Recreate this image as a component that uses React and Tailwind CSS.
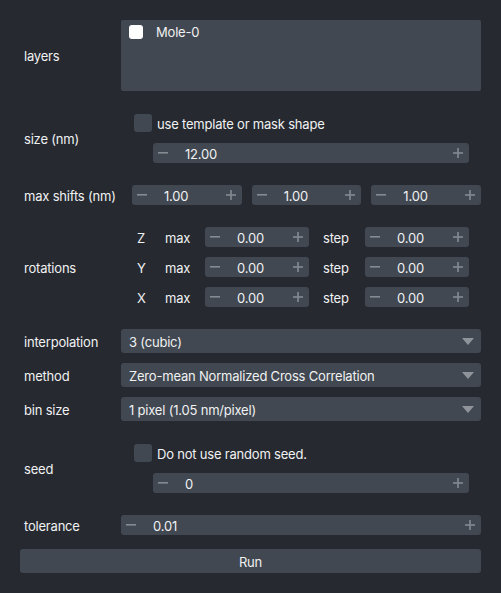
import React from "react";

const Minus = () => (
  <svg width="10" height="10" viewBox="0 0 10 10" className="shrink-0">
    <rect x="0" y="4" width="10" height="1.6" fill="#868b92" />
  </svg>
);

const Plus = () => (
  <svg width="10" height="10" viewBox="0 0 10 10" className="shrink-0">
    <rect x="0" y="4.2" width="10" height="1.6" fill="#868b92" />
    <rect x="4.2" y="0" width="1.6" height="10" fill="#868b92" />
  </svg>
);

const SpinBox = ({ value, className = "" }) => (
  <div
    className={`flex h-[20px] items-center rounded-[3px] bg-[#414851] ${className}`}
  >
    <div className="ml-[5px]">
      <Minus />
    </div>
    <span className="ml-[17px] flex-1 pt-[2px] leading-none">{value}</span>
    <div className="mr-[6px]">
      <Plus />
    </div>
  </div>
);

const ComboBox = ({ value }) => (
  <div className="flex h-[24px] flex-1 items-center rounded-[3px] bg-[#414851] pl-[8px] pr-[7px]">
    <span className="flex-1 pt-[2px] leading-none">{value}</span>
    <svg width="12" height="7" viewBox="0 0 12 7">
      <polygon points="0,0 12,0 6,7" fill="#8f949a" />
    </svg>
  </div>
);

const CheckBox = ({ label }) => (
  <div className="flex h-[18px] items-center">
    <div className="h-[18px] w-[18px] rounded-[3px] bg-[#414851]" />
    <span className="ml-[5px] pt-[2px] leading-none">{label}</span>
  </div>
);

const Label = ({ children, w = "w-[101px]" }) => (
  <div className={`${w} shrink-0 pl-[4px] pt-[2px] leading-none`}>
    {children}
  </div>
);

export default function App() {
  return (
    <div
      className="h-[593px] w-[501px] bg-[#262930] px-[20px] text-[13px] tracking-[-0.2px] text-[#f0f1f2]"
      style={{ fontFamily: "Inter, 'Noto Sans', sans-serif" }}
    >
      {/* layers */}
      <div className="flex items-center pt-[20px]">
        <Label>layers</Label>
        <div className="h-[71px] flex-1 rounded-[2px] bg-[#414851] pl-[8px] pt-[4px]">
          <div className="flex items-center">
            <div className="h-[14px] w-[14px] rounded-[3px] bg-white" />
            <span className="ml-[13px] pt-[2px] leading-none">Mole-0</span>
          </div>
        </div>
      </div>

      {/* size */}
      <div className="mt-[23px] flex items-center">
        <Label>size (nm)</Label>
        <div className="flex flex-1 flex-col">
          <div className="ml-[13px]">
            <CheckBox label="use template or mask shape" />
          </div>
          <SpinBox value="12.00" className="ml-[32px] mr-[12px] mt-[11px]" />
        </div>
      </div>

      {/* max shifts */}
      <div className="mt-[22px] flex items-center">
        <Label w="w-[112px]">max shifts (nm)</Label>
        <div className="flex flex-1 gap-[10px]">
          <SpinBox value="1.00" className="flex-1" />
          <SpinBox value="1.00" className="flex-1" />
          <SpinBox value="1.00" className="flex-1" />
        </div>
      </div>

      {/* rotations */}
      <div className="mt-[22px] flex items-center">
        <Label>rotations</Label>
        <div className="flex flex-col gap-[10px] pl-[16px]">
          {["Z", "Y", "X"].map((axis) => (
            <div key={axis} className="flex h-[20px] items-center">
              <span className="w-[28px] pt-[2px] leading-none">{axis}</span>
              <span className="w-[40px] pt-[2px] leading-none">max</span>
              <SpinBox value="0.00" className="w-[104px]" />
              <span className="ml-[14px] w-[42px] pt-[2px] leading-none">
                step
              </span>
              <SpinBox value="0.00" className="w-[104px]" />
            </div>
          ))}
        </div>
      </div>

      {/* combos */}
      <div className="mt-[22px] flex flex-col gap-[10px]">
        <div className="flex items-center">
          <Label>interpolation</Label>
          <ComboBox value="3 (cubic)" />
        </div>
        <div className="flex items-center">
          <Label>method</Label>
          <ComboBox value="Zero-mean Normalized Cross Correlation" />
        </div>
        <div className="flex items-center">
          <Label>bin size</Label>
          <ComboBox value="1 pixel (1.05 nm/pixel)" />
        </div>
      </div>

      {/* seed */}
      <div className="mt-[23px] flex items-center">
        <Label>seed</Label>
        <div className="flex flex-1 flex-col">
          <div className="ml-[13px]">
            <CheckBox label="Do not use random seed." />
          </div>
          <SpinBox value="0" className="ml-[32px] mr-[12px] mt-[11px]" />
        </div>
      </div>

      {/* tolerance */}
      <div className="mt-[22px] flex items-center">
        <Label>tolerance</Label>
        <SpinBox value="0.01" className="flex-1" />
      </div>

      <button className="mt-[14px] flex h-[24px] w-full items-center justify-center rounded-[3px] bg-[#414851] pt-[2px] leading-none">
        Run
      </button>
    </div>
  );
}
